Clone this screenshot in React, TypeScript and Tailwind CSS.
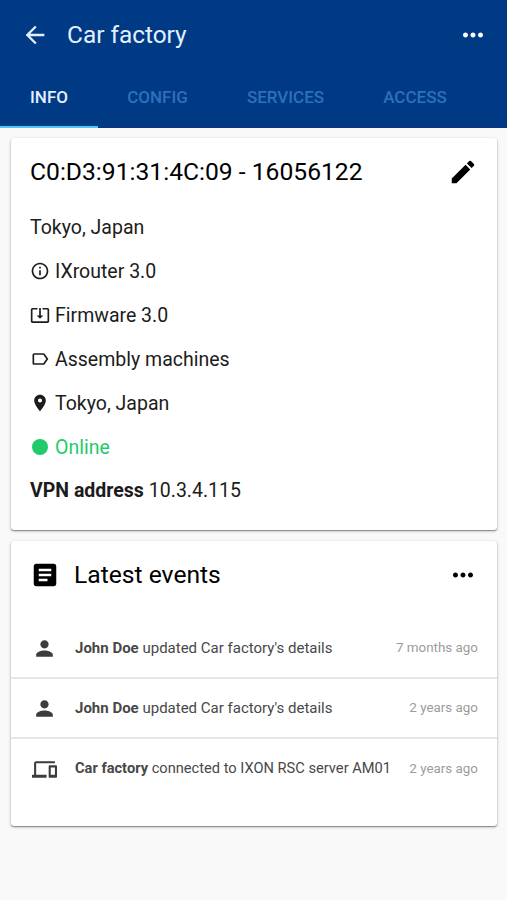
import type { ReactNode } from 'react';
import {
  MdArrowBack,
  MdArticle,
  MdDevices,
  MdEdit,
  MdInfoOutline,
  MdLabelOutline,
  MdMoreHoriz,
  MdPerson,
  MdPlace,
  MdSystemUpdateAlt,
} from 'react-icons/md';

interface EventItem {
  icon: ReactNode;
  subject: string;
  action: string;
  time: string;
  textClass: string;
}

const tabs = [
  { name: 'INFO', className: 'w-[98px] text-[#e3efff]' },
  { name: 'CONFIG', className: 'w-[119px] text-[#2e70bb]' },
  { name: 'SERVICES', className: 'w-[137px] text-[#2e70bb]' },
  { name: 'ACCESS', className: 'w-[122px] text-[#2e70bb]' },
];

const details = [
  { icon: <MdInfoOutline />, label: 'IXrouter 3.0' },
  { icon: <MdSystemUpdateAlt />, label: 'Firmware 3.0' },
  { icon: <MdLabelOutline />, label: 'Assembly machines' },
  { icon: <MdPlace />, label: 'Tokyo, Japan' },
];

const events: EventItem[] = [
  {
    icon: <MdPerson />,
    subject: 'John Doe',
    action: "updated Car factory's details",
    time: '7 months ago',
    textClass: 'text-[15px]',
  },
  {
    icon: <MdPerson />,
    subject: 'John Doe',
    action: "updated Car factory's details",
    time: '2 years ago',
    textClass: 'text-[15px]',
  },
  {
    icon: <MdDevices />,
    subject: 'Car factory',
    action: 'connected to IXON RSC server AM01',
    time: '2 years ago',
    textClass: 'text-[14.65px]',
  },
];

const Header = () => (
  <header className="h-32 bg-[#003a84] shadow-[inset_0_-1px_0_#12307a]">
    <div className="flex items-center h-[70px] pl-[21px] pr-[19px] text-[#e3efff]">
      <button aria-label="Back">
        <MdArrowBack className="w-7 h-7" />
      </button>
      <h1 className="ml-[18px] flex-1 text-[24.4px]">Car factory</h1>
      <button aria-label="More">
        <MdMoreHoriz className="w-[30px] h-[30px] text-white" />
      </button>
    </div>
    <nav className="flex h-[58px]">
      {tabs.map((tab) => (
        <button
          key={tab.name}
          className={`relative pb-0.5 text-[17px] font-medium ${tab.className}`}
        >
          {tab.name}
          {tab.name === 'INFO' && <span className="absolute left-0 bottom-0 w-full h-0.5 bg-[#4fc6f8]" />}
        </button>
      ))}
    </nav>
  </header>
);

const Card = ({ className, children }: { className: string; children: ReactNode }) => (
  <section className={`ml-[11px] mr-2.5 bg-white rounded-[3px] shadow-[0_1px_3px_rgba(0,0,0,0.3),0_1px_1px_rgba(0,0,0,0.3)] ${className}`}>
    {children}
  </section>
);

const App = () => {
  return (
    <div className="h-[900px] overflow-hidden bg-[#f9f9f9] font-[Roboto,sans-serif] text-[#1c1c1c]">
      <Header />

      <Card className="mt-2.5 h-[392px] px-[19px]">
        <div className="flex items-center justify-between h-[68px] text-black">
          <h2 className="text-[24.65px]">C0:D3:91:31:4C:09 - 16056122</h2>
          <button aria-label="Edit">
            <MdEdit className="w-[30px] h-[30px]" />
          </button>
        </div>
        <div className="text-[19.5px]">
          <p className="flex items-center h-11">Tokyo, Japan</p>
          {details.map((item) => (
            <div key={item.label} className="flex items-center gap-[5px] h-11">
              <span className="text-[20px] pb-0.5">{item.icon}</span>
              <span>{item.label}</span>
            </div>
          ))}
          <div className="flex items-center gap-[7px] h-11 pl-0.5 text-[#1fcb6b]">
            <span className="w-4 h-4 mb-0.5 rounded-full bg-current" />
            <span>Online</span>
          </div>
          <p className="flex items-center gap-[5px] h-[42px]">
            <strong className="font-bold">VPN address</strong>
            <span>10.3.4.115</span>
          </p>
        </div>
      </Card>

      <Card className="mt-[11px] h-[285px]">
        <div className="flex items-center h-[68px] px-[19px] text-black">
          <MdArticle className="w-[30px] h-[30px]" />
          <h2 className="ml-3.5 flex-1 text-[24.65px]">Latest events</h2>
          <button aria-label="More events">
            <MdMoreHoriz className="w-[30px] h-[30px]" />
          </button>
        </div>
        <ul className="pt-2.5">
          {events.map((event, i) => (
            <li
              key={i}
              className="flex items-center h-[60px] pl-[21px] pr-[19px] border-b-2 border-[#e6e6e6] last:border-b-0"
            >
              <span className="text-[25px] text-[#3c3c3c]">{event.icon}</span>
              <p className={`ml-[18px] flex-1 whitespace-nowrap text-[#484848] ${event.textClass}`}>
                <strong className="font-bold">{event.subject}</strong> {event.action}
              </p>
              <time className="whitespace-nowrap text-[13.4px] text-[#9c9c9c]">{event.time}</time>
            </li>
          ))}
        </ul>
      </Card>
    </div>
  );
};

export default App;
